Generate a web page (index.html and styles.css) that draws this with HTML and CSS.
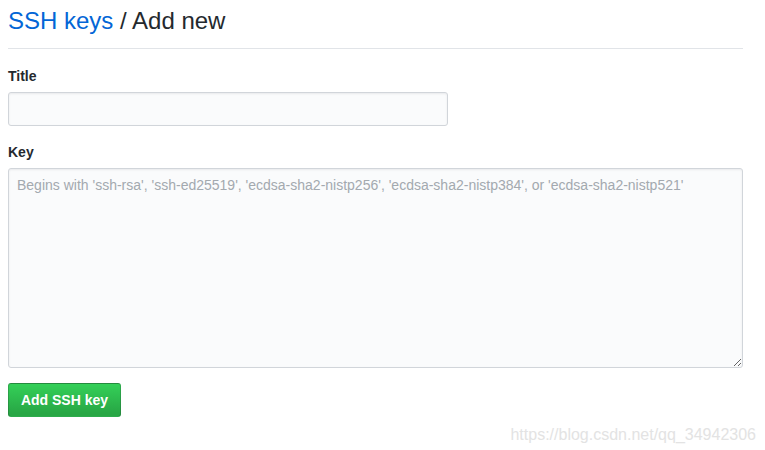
FILE: index.html
```html
<!DOCTYPE html>
<html>
<head>
<meta charset="utf-8">
<link rel="stylesheet" href="styles.css">
</head>
<body>
<div class="page">
  <div class="subhead">
    <h2 class="subhead-heading"><a class="crumb" href="#">SSH keys</a> / Add new</h2>
  </div>
  <form class="form">
    <div class="group group-title">
      <label class="label" for="title">Title</label>
      <input class="input input-title" id="title" type="text">
    </div>
    <div class="group group-key">
      <label class="label" for="key">Key</label>
      <textarea class="input input-key" id="key" placeholder="Begins with 'ssh-rsa', 'ssh-ed25519', 'ecdsa-sha2-nistp256', 'ecdsa-sha2-nistp384', or 'ecdsa-sha2-nistp521'"></textarea>
    </div>
    <button class="btn-primary" type="button">Add SSH key</button>
  </form>
</div>
<div class="watermark">https://blog.csdn.net/qq_34942306</div>
</body>
</html>
```

FILE: styles.css
```css
html, body {
  margin: 0;
  padding: 0;
  background: #fff;
}
body {
  font-family: "Liberation Sans", Arial, sans-serif;
  font-size: 14px;
  color: #24292e;
  width: 765px;
  height: 450px;
  overflow: hidden;
  position: relative;
}
.page {
  width: 735px;
  padding: 6px 8px 0 8px;
}
.subhead {
  border-bottom: 1px solid #e1e4e8;
  padding-bottom: 12px;
  margin-bottom: 17px;
}
.subhead-heading {
  margin: 0;
  font-size: 24px;
  font-weight: normal;
  line-height: 30px;
  color: #24292e;
}
.crumb {
  color: #0366d6;
  text-decoration: none;
}
.form {
  display: flex;
  flex-direction: column;
  align-items: flex-start;
}
.group {
  display: flex;
  flex-direction: column;
  align-items: flex-start;
  width: 100%;
}
.label {
  font-weight: bold;
  font-size: 14px;
  line-height: 21px;
}
.group-title .label {
  margin-bottom: 5px;
}
.group-title {
  margin-bottom: 16px;
}
.group-key .label {
  margin-bottom: 5px;
}
.group-key {
  margin-bottom: 15px;
}
.input {
  box-sizing: border-box;
  font-family: "Liberation Sans", Arial, sans-serif;
  font-size: 14px;
  line-height: 20px;
  color: #24292e;
  background: #fafbfc;
  border: 1px solid #d1d5da;
  border-radius: 3px;
  padding: 6px 8px;
  margin: 0;
  outline: none;
  box-shadow: inset 0 1px 2px rgba(27, 31, 35, 0.075);
}
.input-title {
  width: 440px;
  height: 34px;
}
.input-key {
  width: 735px;
  height: 200px;
  resize: vertical;
}
.input-key::placeholder {
  color: #a3a9af;
  opacity: 1;
}
.btn-primary {
  box-sizing: border-box;
  height: 34px;
  width: 113px;
  padding: 6px 0;
  text-align: center;
  white-space: nowrap;
  font-family: "Liberation Sans", Arial, sans-serif;
  font-size: 14px;
  font-weight: bold;
  line-height: 20px;
  color: #fff;
  background-color: #28a745;
  background-image: linear-gradient(-180deg, #34d058 0%, #28a745 90%);
  border: 1px solid rgba(27, 31, 35, 0.2);
  border-radius: 3px;
  cursor: pointer;
}
.watermark {
  position: absolute;
  right: 9px;
  bottom: 6px;
  font-family: "Liberation Sans", Arial, sans-serif;
  font-size: 16px;
  line-height: 18px;
  color: #e3e3e3;
}
```
